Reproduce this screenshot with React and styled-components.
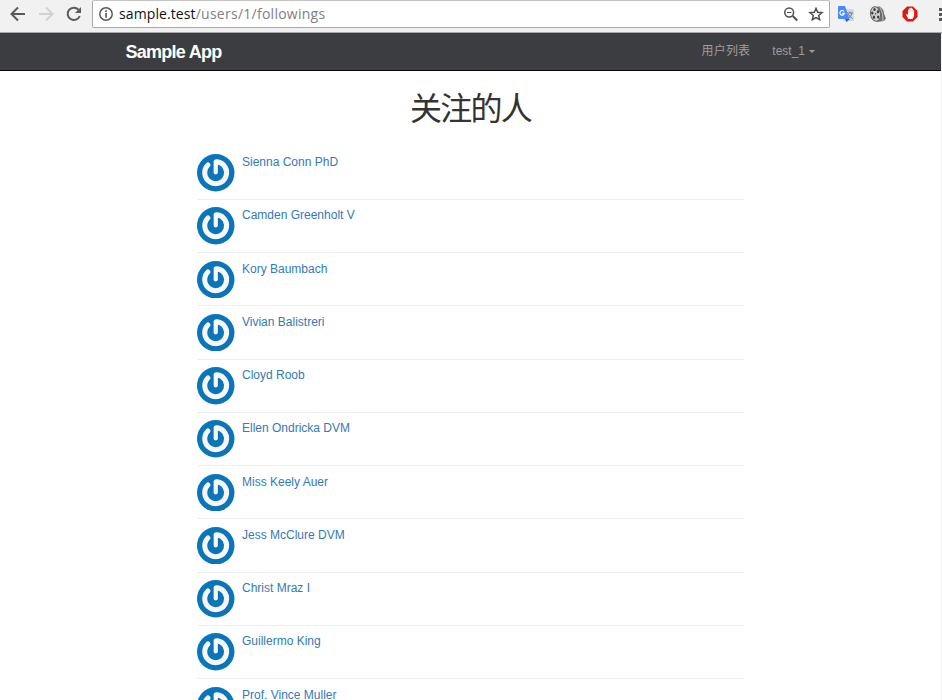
import React from 'react';
import styled, { createGlobalStyle } from 'styled-components';

const Global = createGlobalStyle`
  * { box-sizing: border-box; }
  html, body { margin: 0; height: 100%; overflow: hidden; background: #fff; }
  body { font: 12px/17px "Liberation Sans", "Noto Sans CJK SC", sans-serif; color: #333; }
`;

const Window = styled.div`
  height: 700px;
  overflow: hidden;
  display: flex;
  flex-direction: column;
`;

const Toolbar = styled.div`
  flex: none;
  height: 33px;
  display: flex;
  align-items: flex-start;
  background: #f1f1f1;
  border-bottom: 1px solid #a9a7aa;
  overflow: hidden;
`;

const NavIcons = styled.div`
  flex: none;
  width: 92px;
  height: 28px;
  svg { display: block; }
`;

const AddressBar = styled.div`
  flex: none;
  width: 738px;
  height: 28px;
  display: flex;
  align-items: center;
  padding: 0 4px 0 6px;
  background: #fff;
  border: 1px solid #a9a9a9;
  border-top-color: #c4c4c4;
  border-radius: 2px;
  svg { display: block; flex: none; }
`;

const Url = styled.div`
  flex: 1;
  padding-left: 6px;
  font: 14px/20px "Open Sans", sans-serif;
  letter-spacing: 0.26px;
  white-space: nowrap;
  color: #808080;
`;

const Host = styled.span`
  letter-spacing: 0.1px;
  color: #111;
`;

const Extensions = styled.div`
  flex: none;
  width: 112px;
  height: 28px;
  svg { display: block; }
`;

const Page = styled.div`
  flex: 1;
  min-height: 0;
  border-right: 1px solid #f1f1f1;
  overflow: hidden;
`;

const Navbar = styled.header`
  height: 38px;
  display: flex;
  justify-content: space-between;
  padding: 0 126px 0 125.6px;
  background: #3c3d41;
  border-bottom: 1px solid #080808;
`;

const Brand = styled.a`
  font-size: 18px;
  line-height: 38px;
  font-weight: 700;
  letter-spacing: -0.75px;
  color: #fff;
`;

const Menu = styled.nav`
  display: flex;
  gap: 22px;
  color: #9d9d9d;
  line-height: 36px;
`;

const MenuItem = styled.a`
  display: flex;
  align-items: center;
  height: 36px;
  letter-spacing: ${p => p.$tracking || '0'};
`;

const Caret = styled.span`
  margin: 1px 0 0 4px;
  border: 3px solid transparent;
  border-top-color: #9d9d9d;
  border-bottom: 0;
`;

const Content = styled.main`
  width: 547px;
  margin: 0 auto;
`;

const Title = styled.h1`
  margin: 0;
  height: 75.55px;
  padding-top: 12px;
  font: 400 32px/46px "Noto Sans CJK SC", sans-serif;
  letter-spacing: -1.7px;
  text-align: center;
  color: #333;
`;

const Users = styled.ul`
  list-style: none;
  margin: 0;
  padding: 0;
`;

const User = styled.li`
  display: flex;
  height: 53.25px;
  padding-top: 7.5px;
  border-bottom: 1px solid #eee;
`;

const Name = styled.a`
  margin-left: 7.5px;
  line-height: 17px;
  color: #337ab7;
`;

const AvatarSvg = styled.svg`
  flex: none;
  width: 37.5px;
  height: 37.5px;
`;

const Avatar = () => (
  <AvatarSvg viewBox="0 0 50 50">
    <circle cx="25" cy="25" r="25" fill="#0a75b9" />
    <g fill="none" strokeLinecap="round">
      <g transform="translate(.5 .9)" stroke="#064f80" strokeOpacity=".3">
        <path d="M14.600 14.600A14.600 14.600 0 1 0 27 10.500" strokeWidth="6.800" />
        <path d="M25 11V24.500" strokeWidth="6" />
      </g>
      <path d="M14.600 14.600A14.600 14.600 0 1 0 27 10.500" stroke="#f6f6f6" strokeWidth="6.800" />
      <path d="M25 10V24.500" stroke="#fbfbfb" strokeWidth="5.600" />
    </g>
  </AvatarSvg>
);

const BrowserNav = () => (
  <svg width="92" height="28" fill="none" strokeWidth="2">
    <path d="M25 14H12M18 7.5L11.5 14L18 20.5" stroke="#5a5a5a" />
    <path d="M39 14H52M46 7.5L52.500 14L46 20.5" stroke="#d2d2d2" />
    <path d="M78.500 9.700A6.200 6.200 0 1 0 79.700 16" stroke="#5a5a5a" />
    <path d="M81 7V13H75Z" fill="#5a5a5a" />
  </svg>
);

const InfoIcon = () => (
  <svg width="14" height="14" viewBox="0 0 14 14">
    <circle cx="7" cy="7" r="6.2" fill="none" stroke="#5a5a5a" strokeWidth="1.500" />
    <path d="M6.200 3.300h1.700v1.600H6.200zM6.200 6h1.700v4.700H6.200z" fill="#5a5a5a" />
  </svg>
);

const BarIcons = () => (
  <svg width="42" height="26" fill="none" stroke="#4f4f4f">
    <circle cx="6.200" cy="11.500" r="4.400" strokeWidth="1.500" />
    <path d="M9.700 15L14.200 19.500" strokeWidth="2" />
    <path d="M4 11.500h4.400" strokeWidth="1" />
    <path d="M33 7.300L34.700 11.300L39 11.700L35.700 14.500L36.700 18.700L33 16.500L29.300 18.700L30.300 14.500L27 11.700L31.300 11.300Z" strokeWidth="1.500" />
  </svg>
);

const ExtensionIcons = () => (
  <svg width="112" height="28">
    <rect x="13" y="9" width="11" height="12" rx="1" fill="#d5d9dd" />
    <path d="M17.500 13h5.500M20 11.500v1.500M22 13q-1 4-4 5.500M18 14q2 3 4.500 4.500" stroke="#647f8d" fill="none" />
    <path d="M9 6h6l4.500 13H9q-1 0-1-1V7q0-1 1-1z" fill="#4a8af4" />
    <path d="M15 19h5l-3.500 3z" fill="#3458c8" />
    <path d="M14 11.400a2.300 2.300 0 1 0 .4 2H12.300" fill="none" stroke="#fff" strokeWidth="1.200" />
    <path d="M44 7l6-.5q4 3 4 7l2 5-2 2.500-7 1z" fill="#727272" />
    <path d="M50 7q3.500 6 3 14" fill="none" stroke="#bbb" />
    <ellipse cx="45.500" cy="14" rx="5" ry="7.300" fill="#cfcfcf" stroke="#666" transform="rotate(-10 45.500 14)" />
    <g fill="#3c3c3c">
      <ellipse cx="44.500" cy="9.500" rx="1.200" ry="1.600" /><ellipse cx="42.300" cy="13" rx="1.200" ry="1.600" />
      <ellipse cx="48" cy="11.700" rx="1.200" ry="1.600" /><ellipse cx="44" cy="17.200" rx="1.200" ry="1.600" />
      <ellipse cx="48.200" cy="17" rx="1.200" ry="1.600" /><circle cx="45.600" cy="13.800" r=".7" />
    </g>
    <path d="M77 6.500h6l4.500 4.500v6L83 21.500h-6L72.500 17v-6z" fill="#e3150f" />
    <path d="M78.300 19L76 14.500l1-.5 1 1V9.500h1.200V8.300h1.300v-.6h1.200v1H83v1.500h1.100V16L82.500 19z" fill="#fff" />
    <path d="M79.200 9v4M80.700 8.500v4.500M82.700 10v3" stroke="#f6b3b0" strokeWidth=".4" />
    <g fill="#5a5a5a">
      <rect x="109" y="8" width="3" height="3" /><rect x="109" y="13" width="3" height="3" />
      <rect x="109" y="18" width="3" height="3" />
    </g>
  </svg>
);

const USERS = [
  'Sienna Conn PhD', 'Camden Greenholt V', 'Kory Baumbach', 'Vivian Balistreri',
  'Cloyd Roob', 'Ellen Ondricka DVM', 'Miss Keely Auer', 'Jess McClure DVM',
  'Christ Mraz I', 'Guillermo King', 'Prof. Vince Muller',
];

export default function App() {
  return (
    <Window>
      <Global />
      <Toolbar>
        <NavIcons><BrowserNav /></NavIcons>
        <AddressBar>
          <InfoIcon />
          <Url><Host>sample.test</Host>/users/1/followings</Url>
          <BarIcons />
        </AddressBar>
        <Extensions><ExtensionIcons /></Extensions>
      </Toolbar>
      <Page>
        <Navbar>
          <Brand>Sample App</Brand>
          <Menu>
            <MenuItem $tracking="0.2px">用户列表</MenuItem>
            <MenuItem>test_1<Caret /></MenuItem>
          </Menu>
        </Navbar>
        <Content>
          <Title>关注的人</Title>
          <Users>
            {USERS.map(name => (
              <User key={name}><Avatar /><Name>{name}</Name></User>
            ))}
          </Users>
        </Content>
      </Page>
    </Window>
  );
}
